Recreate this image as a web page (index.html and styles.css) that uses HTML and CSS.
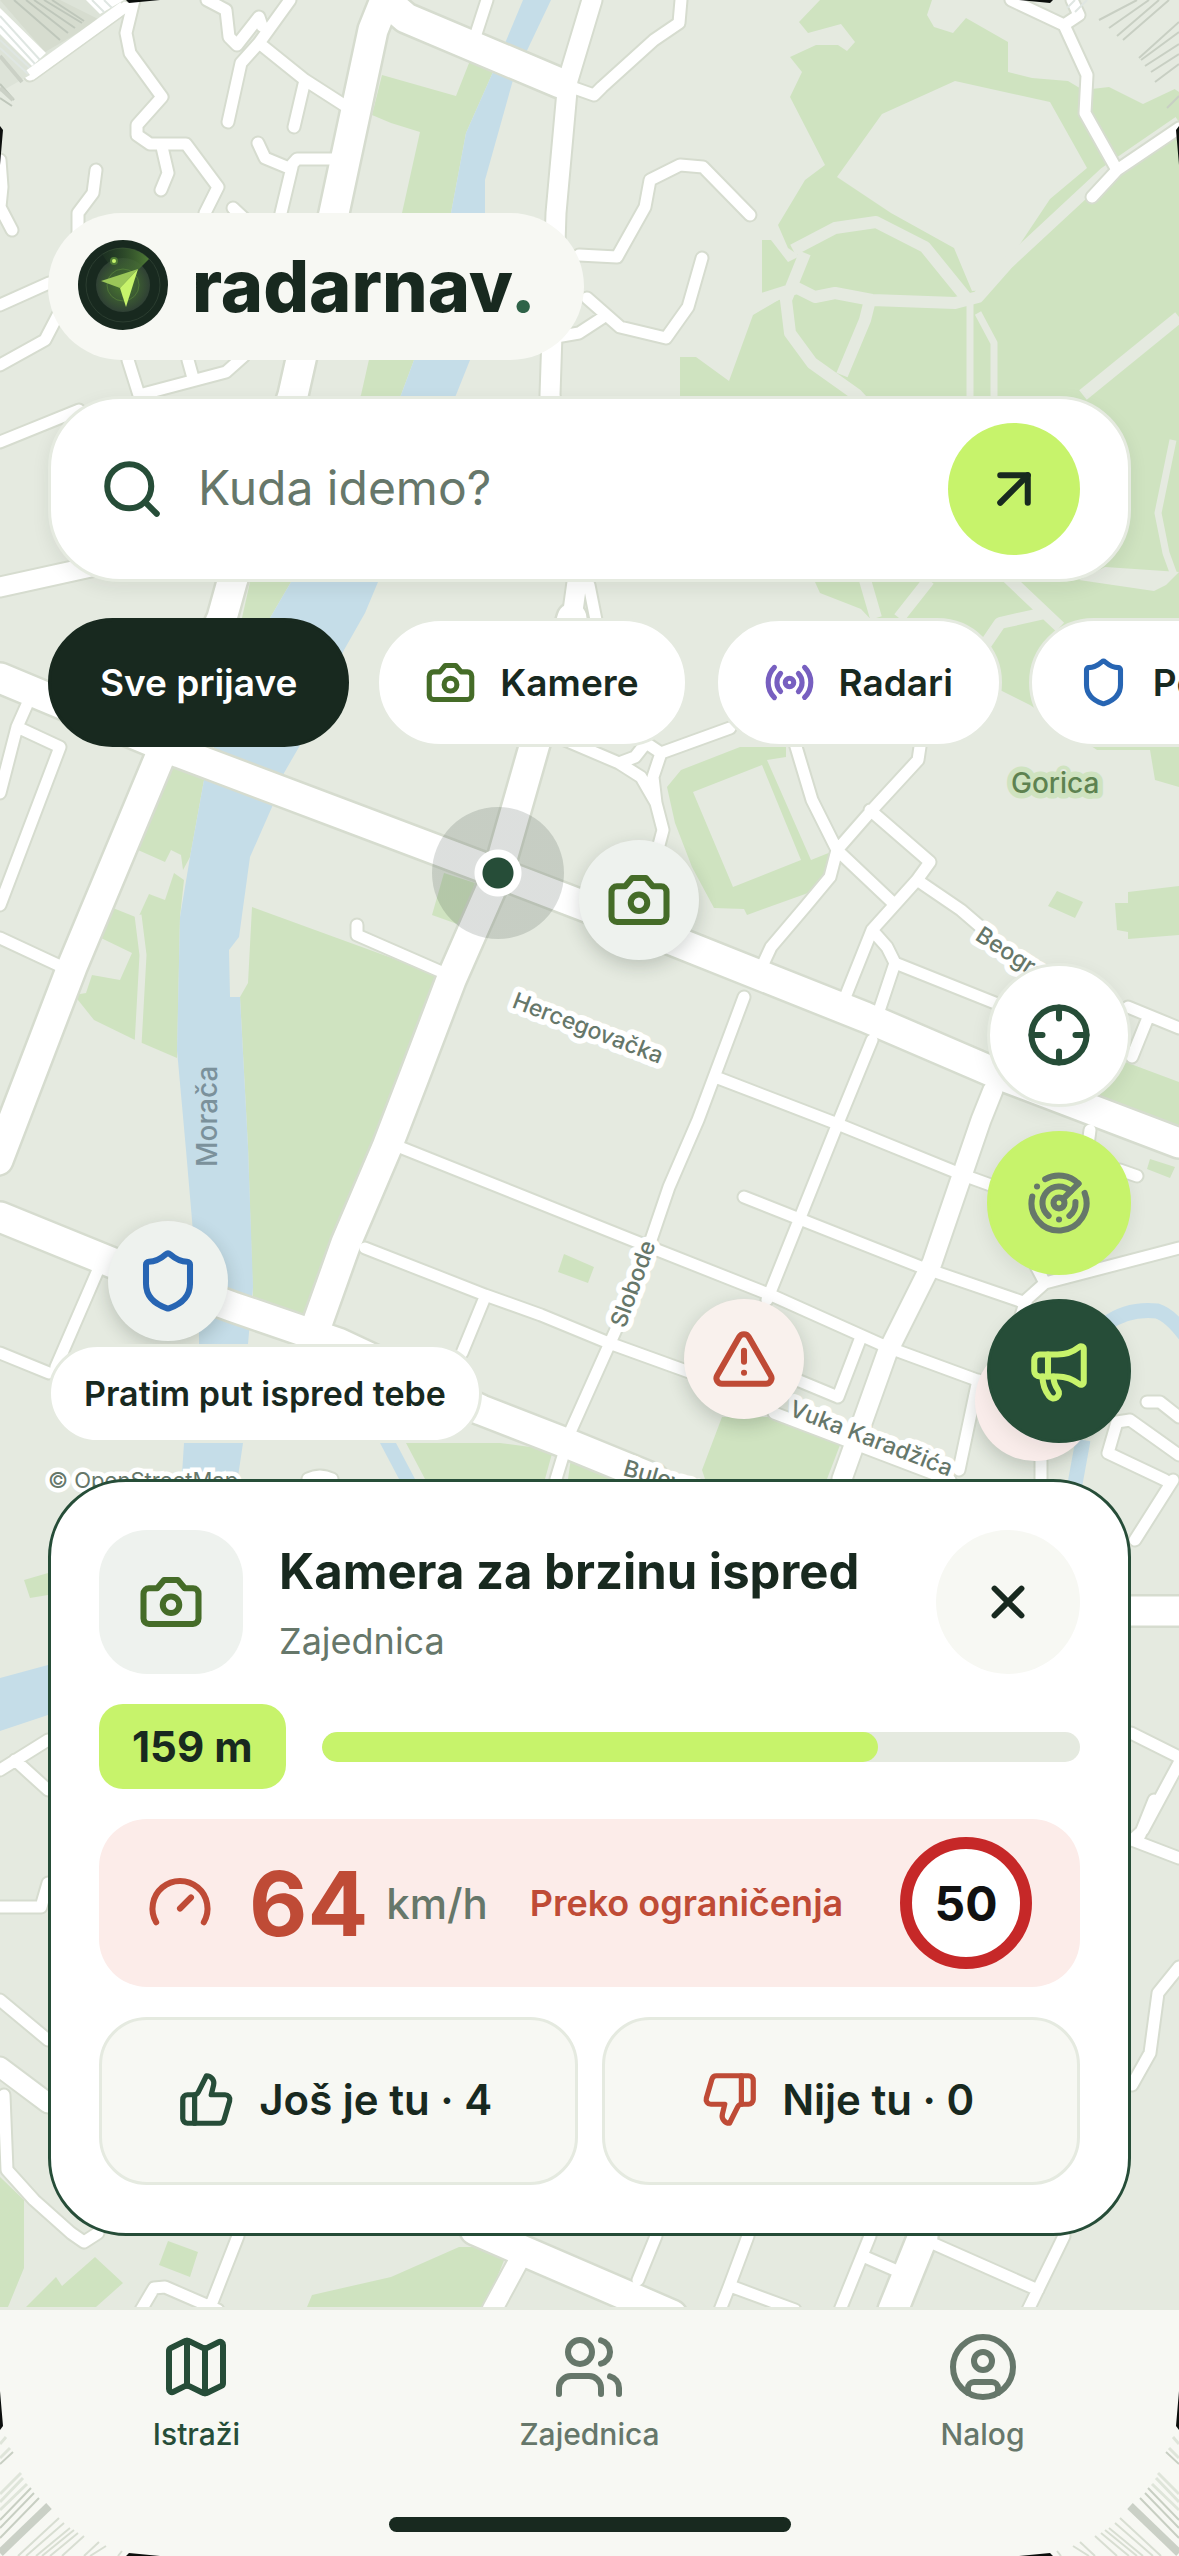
FILE: index.html
```html
<!DOCTYPE html>
<html lang="sr-Latn">

<head>
  <meta charset="UTF-8" />
  <meta name="viewport" content="width=device-width, initial-scale=1.0" />
  <title>radarnav</title>
  <link rel="stylesheet" href="styles.css">
</head>

<body>
  <!-- icon set -->
  <svg class="sprite" aria-hidden="true">
    <symbol id="i-search" viewBox="0 0 24 24"><circle cx="11" cy="11" r="8" /><path d="m21 21-4.3-4.3" /></symbol>
    <symbol id="i-arrow" viewBox="0 0 24 24"><path d="M7 7h10v10" /><path d="M7 17 17 7" /></symbol>
    <symbol id="i-camera" viewBox="0 0 24 24"><path d="M14.5 4h-5L7 7H4a2 2 0 0 0-2 2v9a2 2 0 0 0 2 2h16a2 2 0 0 0 2-2V9a2 2 0 0 0-2-2h-3l-2.500-3z" /><circle cx="12" cy="13" r="3" /></symbol>
    <symbol id="i-radio" viewBox="0 0 24 24"><path d="M4.900 19.100C1 15.200 1 8.800 4.900 4.900" /><path d="M7.800 16.200c-2.300-2.300-2.300-6.100 0-8.500" /><circle cx="12" cy="12" r="2" /><path d="M16.200 7.800c2.300 2.300 2.300 6.100 0 8.500" /><path d="M19.100 4.900C23 8.800 23 15.100 19.100 19" /></symbol>
    <symbol id="i-shield" viewBox="0 0 24 24"><path d="M20 13c0 5-3.500 7.500-7.660 8.950a1 1 0 0 1-.67-.01C7.500 20.500 4 18 4 13V6a1 1 0 0 1 1-1c2 0 4.500-1.200 6.240-2.720a1.170 1.170 0 0 1 1.520 0C14.510 3.810 17 5 19 5a1 1 0 0 1 1 1z" /></symbol>
    <symbol id="i-alert" viewBox="0 0 24 24"><path d="m21.730 18-8-14a2 2 0 0 0-3.480 0l-8 14A2 2 0 0 0 4 21h16a2 2 0 0 0 1.730-3" /><path d="M12 9v4" /><path d="M12 17h.01" /></symbol>
    <symbol id="i-locate" viewBox="0 0 24 24"><circle cx="12" cy="12" r="10" /><path d="M22 12h-4M6 12H2M12 6V2M12 22v-4" /></symbol>
    <symbol id="i-radar" viewBox="0 0 24 24"><path d="M19.070 4.930A10 10 0 0 0 6.990 3.340" /><path d="M4 6h.01" /><path d="M2.290 9.620A10 10 0 1 0 21.310 8.350" /><path d="M16.240 7.760A6 6 0 1 0 8.230 16.670" /><path d="M12 18h.01" /><path d="M17.990 11.660A6 6 0 0 1 15.770 16.670" /><circle cx="12" cy="12" r="2" /><path d="m13.410 10.590 5.660-5.660" /></symbol>
    <symbol id="i-megaphone" viewBox="0 0 24 24"><path d="M11 6a13 13 0 0 0 8.400-2.800A1 1 0 0 1 21 4v12a1 1 0 0 1-1.600.8A13 13 0 0 0 11 14H5a2 2 0 0 1-2-2V8a2 2 0 0 1 2-2z" /><path d="M6 14a12 12 0 0 0 2.400 7.200 2 2 0 0 0 3.200-2.400A8 8 0 0 1 10 14" /><path d="M8 6v8" /></symbol>
    <symbol id="i-close" viewBox="0 0 24 24"><path d="M18 6 6 18M6 6l12 12" /></symbol>
    <symbol id="i-gauge" viewBox="0 0 24 24"><path d="m12 14 4-4" /><path d="M3.340 19a10 10 0 1 1 17.320 0" /></symbol>
    <symbol id="i-up" viewBox="0 0 24 24"><path d="M7 10v12" /><path d="M15 5.880 14 10h5.830a2 2 0 0 1 1.920 2.560l-2.330 8A2 2 0 0 1 17.500 22H4a2 2 0 0 1-2-2v-8a2 2 0 0 1 2-2h2.760a2 2 0 0 0 1.790-1.110L12 2a3.130 3.130 0 0 1 3 3.880Z" /></symbol>
    <symbol id="i-down" viewBox="0 0 24 24"><path d="M17 14V2" /><path d="M9 18.120 10 14H4.170a2 2 0 0 1-1.920-2.560l2.330-8A2 2 0 0 1 6.500 2H20a2 2 0 0 1 2 2v8a2 2 0 0 1-2 2h-2.760a2 2 0 0 0-1.790 1.110L12 22a3.130 3.130 0 0 1-3-3.880Z" /></symbol>
    <symbol id="i-map" viewBox="0 0 24 24"><path d="M14.110 5.550a2 2 0 0 0 1.780 0l3.660-1.830A1 1 0 0 1 21 4.620v12.760a1 1 0 0 1-.55.9l-4.560 2.270a2 2 0 0 1-1.780 0l-4.220-2.100a2 2 0 0 0-1.780 0l-3.660 1.830A1 1 0 0 1 3 19.380V6.620a1 1 0 0 1 .55-.9l4.560-2.270a2 2 0 0 1 1.780 0z" /><path d="M15 5.760v15M9 3.240v15" /></symbol>
    <symbol id="i-users" viewBox="0 0 24 24"><path d="M16 21v-2a4 4 0 0 0-4-4H6a4 4 0 0 0-4 4v2" /><circle cx="9" cy="7" r="4" /><path d="M22 21v-2a4 4 0 0 0-3-3.870" /><path d="M16 3.130a4 4 0 0 1 0 7.750" /></symbol>
    <symbol id="i-user" viewBox="0 0 24 24"><circle cx="12" cy="12" r="10" /><circle cx="12" cy="10" r="3" /><path d="M7 20.660V19a2 2 0 0 1 2-2h6a2 2 0 0 1 2 2v1.660" /></symbol>
  </svg>

  <main class="screen">
    <svg class="map" viewBox="0 0 1179 2556" preserveAspectRatio="xMidYMin slice" role="img" aria-label="Mapa">
      <defs>
        <g id="roads-s">
          <path d="M30 75 124 7M134 0 126 33 130 53 162 97 137 125V135L150 144H186L218 187 205 213M162 147 168 173 161 190M207 0 226 10 229 37 237 45 259 17 262 26M290 0 259 43 241 63 228 122M259 43 305 80 347 107M305 80 294 127" />
          <path d="M258 143 265 158 289 168 297 159H335M292 167 281 213M96 170 93 193 78 213V235M0 160 2 187 0 207 12 230M233 208 248 222M0 305 49 283M0 365 45 340 58 315M128 360 139 395 226 372 244 356M188 360 193 378M139 395 141 402M0 442 79 410" />
          <path d="M487 0 475 37M681 0 679 23 654 40 602 87 594 95 560 83M750 215 703 167 680 165 650 180 645 207 617 257 579 255M702 258 688 307 666 338 620 327 587 298M602 318 579 333 556 337M1011 0 1064 25 1087 75 1085 113 1117 170M1179 128 1117 170 1092 197M1072 0 1079 15 1064 25" />
          <path d="M589 585 596 620M29 700 17 727 60 747 0 905M17 727 0 793M0 938 58 965M98 1270 56 1367M0 1353 49 1373M565 740 619 763 641 777 656 803 663 830 659 845M619 763 635 757 646 743 661 753 730 728M661 753 653 777 656 803" />
          <path d="M794 740 812 800 837 850 892 902M921 740 918 760 872 810 837 850 830 877 805 907 771 947 758 975M870 810 930 862 917 880 872 930 860 960 840 1010M917 880 961 910 990 935M872 930 887 947 895 963 876 1020M895 963 1000 1005M1128 1007 1179 1028M1147 1020 1132 1057M357 925V935L444 973" />
          <path d="M744 997 698 1120 669 1187 635 1287 571 1430 556 1479M872 1040 838 1123 767 1300M485 1297 462 1353M861 1337 838 1397M978 1380 959 1470M1041 1455V1479M718 1078 835 1123 963 1175 1010 1192M402 1148 632 1240 771 1295 887 1347 985 1383M744 1197 921 1267 1026 1303M365 1248 485 1295 541 1315 609 1343 692 1373M797 1380 838 1397M774 1413 950 1480" />
          <path d="M1179 1248 1045 1283 1026 1300 1018 1325M1036 1266 1045 1283M1090 1130 1088 1145M1120 1170 1137 1176M1147 1402H1160L1179 1417M1179 1455 1130 1420 1117 1422 1108 1453 1165 1480M1173 1480 1135 1540M308 1479Q320 1473 332 1479M1131 1733 1179 1757M1179 1763 1143 1830 1132 1840 1179 1858M1154 1800 1140 1835M1179 1967 1158 1993 1150 2053 1132 2085" />
          <path d="M0 1770 48 1740M15 1760 48 1790M0 1907H41L48 1883M0 2000 48 2040M4 2095 7 2170 34 2200 71 2233 84 2242 98 2233M238 2236 211 2305M141 2310 154 2288 165 2287 218 2310M656 2236 638 2280M748 2236 729 2287 720 2310M733 2287 795 2310M870 2236 840 2310M865 2257 895 2270M932 2243 1038 2290M1064 2236 1028 2310" />
        </g>
        <g id="roads-m">
          <path d="M592 0 568 80 556 213 550 395 577 582 572 618M0 587 100 565M993 1090 981 1120 932 1263 887 1353 842 1479M0 2067 48 2103M519 2260 492 2310" />
        </g>
        <g id="roads-l">
          <path d="M385 0 373 30 334 213 293 395 232 582 222 618 164 747 72 967-2 1160M385 0 406 18 560 83M572 618 534 747 498 873 451 980 414 1077 387 1147 346 1243 316 1327" />
          <path d="M0 678 180 753 331 810 498 873 639 927 865 1017 1000 1075 1179 1143M0 1217 113 1263 233 1307 338 1343 481 1410 571 1445 654 1479M475 2230 672 2315M923 2236 893 2310M1131 1611H1179" />
        </g>
      </defs>

      <g class="park">
        <path d="M382 75 456 96 471 58 493 72 466 133 451 213 414 360 401 395 291 582 270 618H242L250 582 361 395 402 213 420 132 391 123 372 115z" />
        <path d="M820 0 799 22 808 33 841 24 855 42 847 51 838 45H816L790 57 802 72 790 97 825 165 805 180 778 225 788 248 800 256 788 262 771 240H762V297L782 298 753 315 729 381 696 357H680V560L815 582 820 593 861 609 890 640 1003 700 1010 697 1040 720 1085 750H1150L1155 780 1179 787V87L1143 104 1109 87 1083 90 1068 81 1032 78 1008 72V42L966 18 953 33 934 27 927 15 932 0z" />
        <path d="M173 765 204 780 190 857 183 870 181 855 171 850 165 862 138 850zM174 873 165 900 149 894 138 918 113 908 101 938 132 953 120 980 92 975 86 993 74 995 94 1020 135 1040 177 1058 180 917 184 880zM252 907 444 977 406 1063 374 1147 305 1322 253 1300 248 1147 240 997 248 983zM444 873 475 883 460 925 432 915z" />
        <path fill-rule="evenodd" d="M740 747H786V757L767 760 811 860 831 852 827 877 808 893 747 915 744 909 714 908 692 867 675 823 667 787 681 770zM693 792 762 765 801 860 733 887z" />
        <path d="M1128 892 1179 886V935L1128 939V932L1117 930 1115 903H1128zM1057 891 1083 902 1075 918 1048 906zM1120 1060 1179 1082V1130L1098 1098zM1150 1159 1175 1167 1170 1178 1147 1169z" />
        <path d="M406 1443H500L553 1450 545 1479H425zM571 1458 617 1479H568zM722 1417H771L840 1445 827 1479H705L702 1470zM564 1254 594 1267 588 1283 558 1272zM24 1580 48 1573V1595L30 1598z" />
        <path d="M0 2177 24 2200V2268L8 2307H0zM26 2307 56 2277 62 2286 95 2257 123 2283 96 2307zM168 2241 198 2252 190 2277 159 2265zM307 2307 312 2295 391 2277 459 2247H481L505 2258 485 2307z" />
      </g>
      <g class="clearing">
        <path d="M955 81 1050 102 1087 168 1050 199 1008 262 985 290 972 291 954 248 891 213 837 177 882 114zM1079 580 1105 567 1179 572 1166 585 1154 591zM1000 690 1030 705 1100 752 1000 752z" />
      </g>
      <g class="footpath">
        <path d="M1179 122 1128 157 1105 173 1008 263 978 297 955 303 872 300 835 293 815 297 797 288 762 299M793 250 835 228 876 222 925 247 968 300M805 253 786 300 790 333 812 363 857 395 880 420M870 300 865 320 842 375M1179 317 1083 395M865 580 876 618M929 580 899 618M1005 575 1060 627M1045 613 1000 623 985 645" />
        <path class="thin" d="M970 303V400M978 313 994 343V400M1173 440 1158 513 1166 553 1174 575M138 915 143 955 138 1045" />
      </g>
      <g class="water">
        <path d="M523 0H551L513 80 485 180V213L470 360 456 395 378 582 365 613 344 650 299 747 284 773 272 807 250 857 239 937 229 950 230 997H240L248 1147 253 1287 248 1344 243 1443 236 1490H181L184 1443 199 1344V1320L192 1220 186 1150 177 1050 180 917 190 857 204 780 214 747 270 618 291 582 401 395 414 360 451 213 466 133 493 72z" />
        <path d="M380 1443H396L415 1479H399zM0 1678 48 1665V1715L0 1731z" />
        <path class="stream" d="M1106 1324Q1128 1308 1157 1311 1170 1315 1185 1335M1083 1440 1075 1484" />
      </g>

      <g class="casing">
        <use href="#roads-s" class="s" />
        <use href="#roads-m" class="m" />
        <use href="#roads-l" class="l" />
      </g>
      <g class="surface">
        <use href="#roads-s" class="s" />
        <use href="#roads-m" class="m" />
        <use href="#roads-l" class="l" />
      </g>

      <g class="street">
        <text class="place" x="1011" y="793">Gorica</text>
        <text class="river" transform="translate(217 1167) rotate(-90)">Morača</text>
        <text transform="translate(511 1007) rotate(21)">Hercegovačka</text>
        <text transform="translate(974 939) rotate(33)">Beogradska</text>
        <text transform="translate(625 1329) rotate(-70)">Slobode</text>
        <text transform="translate(788 1415) rotate(21)">Vuka Karadžića</text>
        <text transform="translate(622 1475) rotate(16)">Bulevar</text>
      </g>
    </svg>

    <!-- pins on the map -->
    <div class="me"></div>
    <button class="pin pin-camera" aria-label="Kamera"><svg class="icon"><use href="#i-camera" /></svg></button>
    <button class="pin pin-police" aria-label="Policija"><svg class="icon"><use href="#i-shield" /></svg></button>
    <button class="pin pin-danger" aria-label="Opasnost"><svg class="icon"><use href="#i-alert" /></svg></button>
    <button class="pin pin-report" aria-label="Prijava"></button>

    <header class="top">
      <div class="brand">
        <svg class="logo" viewBox="0 0 90 90" aria-hidden="true">
          <defs>
            <radialGradient id="glow">
              <stop offset="0" stop-color="#568d33" />
              <stop offset="1" stop-color="#35463a" />
            </radialGradient>
            <linearGradient id="sweep" x1="0" y1="0" x2="1" y2="0">
              <stop offset="0" stop-color="#2c4a2c" stop-opacity="0.2" />
              <stop offset="1" stop-color="#4f7b35" />
            </linearGradient>
          </defs>
          <circle cx="45" cy="45" r="45" fill="#18291f" />
          <circle cx="45" cy="45" r="37" fill="none" stroke="#2b3d30" />
          <circle cx="45" cy="45" r="27" fill="url(#glow)" opacity="0.8" />
          <path d="M45 45 24 14A37 37 0 0 1 71 19z" fill="url(#sweep)" />
          <circle cx="45" cy="45" r="16" fill="none" stroke="#5d8c3c" opacity="0.6" />
          <circle cx="36" cy="21" r="4" fill="#4f7b35" />
          <circle cx="36" cy="21" r="2" fill="#c7f36b" />
          <path d="M60 29 23 41 42 48z" fill="#9ac659" />
          <path d="M60 29 42 48 48 67z" fill="#c7f36b" />
        </svg>
        <h1>radarnav<span>.</span></h1>
      </div>

      <form class="search">
        <svg class="icon"><use href="#i-search" /></svg>
        <input type="text" placeholder="Kuda idemo?" aria-label="Kuda idemo?" />
        <button type="button" class="go" aria-label="Kreni"><svg class="icon"><use href="#i-arrow" /></svg></button>
      </form>

      <div class="chips">
        <button class="chip active">Sve prijave</button>
        <button class="chip"><svg class="icon green"><use href="#i-camera" /></svg>Kamere</button>
        <button class="chip"><svg class="icon purple"><use href="#i-radio" /></svg>Radari</button>
        <button class="chip"><svg class="icon blue"><use href="#i-shield" /></svg>Policija</button>
      </div>
    </header>

    <div class="tools">
      <div class="toast">Pratim put ispred tebe</div>
      <div class="fabs">
        <button class="fab" aria-label="Moja lokacija"><svg class="icon"><use href="#i-locate" /></svg></button>
        <button class="fab fab-radar" aria-label="Radar"><svg class="icon"><use href="#i-radar" /></svg></button>
        <button class="fab fab-report" aria-label="Prijavi"><svg class="icon"><use href="#i-megaphone" /></svg></button>
      </div>
      <a class="credit" href="#">© OpenStreetMap</a>
    </div>

    <section class="card">
      <div class="card-head">
        <div class="tile"><svg class="icon"><use href="#i-camera" /></svg></div>
        <div class="card-title">
          <h2>Kamera za brzinu ispred</h2>
          <p>Zajednica</p>
        </div>
        <button class="close" aria-label="Zatvori"><svg class="icon"><use href="#i-close" /></svg></button>
      </div>

      <div class="distance">
        <label for="distance">159 m</label>
        <progress id="distance" max="1000" value="734"></progress>
      </div>

      <div class="speed">
        <svg class="icon"><use href="#i-gauge" /></svg>
        <strong>64</strong>
        <span class="unit">km/h</span>
        <span class="over">Preko ograničenja</span>
        <span class="limit">50</span>
      </div>

      <div class="votes">
        <button class="vote"><svg class="icon dark"><use href="#i-up" /></svg>Još je tu · 4</button>
        <button class="vote"><svg class="icon red"><use href="#i-down" /></svg>Nije tu · 0</button>
      </div>
    </section>

    <nav class="tabs">
      <a class="tab active" href="#"><svg class="icon"><use href="#i-map" /></svg>Istraži</a>
      <a class="tab" href="#"><svg class="icon"><use href="#i-users" /></svg>Zajednica</a>
      <a class="tab" href="#"><svg class="icon"><use href="#i-user" /></svg>Nalog</a>
      <div class="home-bar"></div>
    </nav>

    <!-- streaked screen corners -->
    <svg class="corner top-left" viewBox="0 0 180 180" aria-hidden="true">
      <path fill="#dde3d8" d="M0 0H126L30 75 0 92z" />
      <path fill="#d6dccf" d="M0 0H60L100 20 45 52z" />
      <path fill="#fff" d="M0 8 46 53 32 66 0 34zM86 0H124L100 14z" />
      <path stroke="#bfc7bb" stroke-width="2" d="M14 0 60 40M26 0 68 33M34 0 75 28M44 0 82 23M52 0 84 21M0 84 14 100M0 98 12 106" />
      <path stroke="#dfe6e2" stroke-width="2" d="M0 16 40 60M0 26 36 65M0 40 32 70M0 48 28 74M92 0 104 12M104 0 112 8" />
      <path stroke="#cbd1c6" stroke-width="4" d="M0 56 22 82M0 88 13 100" />
      <path stroke="#fff" stroke-width="12" d="M30 75 124 7" />
      <path fill="#0c0f0d" d="M126 0H160L129 3zM0 126 3 130 0 165z" />
    </svg>
    <svg class="corner top-right" viewBox="0 0 180 180" aria-hidden="true">
      <path fill="#e5eae0" d="M0 0H96L36 68 0 92z" />
      <path stroke="#c8cfc3" stroke-width="2" d="M10 0 56 40M20 0 62 36M30 0 70 28M42 0 80 20M0 22 40 58M0 32 38 60M0 44 34 66M0 54 28 72M0 64 24 82M0 96 12 108" />
      <path stroke="#dfe6e2" stroke-width="2" d="M92 0 104 12M104 0 112 8" />
      <path fill="#0c0f0d" d="M126 0H160L129 3zM0 126 3 130 0 165z" />
    </svg>
    <svg class="corner bottom-left" viewBox="0 0 180 180" aria-hidden="true">
      <path stroke="#cad0c6" stroke-width="8" d="M0 3 49 50" />
      <path stroke="#d8ded2" stroke-width="2" d="M18 0 59 38M26 0 64 33M36 0 70 28M42 0 74 26M50 0 78 23M62 0 84 20M84 0 99 14M90 0 106 10M118 0 122 5" />
      <path stroke="#c8cfc3" stroke-width="2" d="M0 18 39 58M0 28 34 63M0 36 31 68M0 92 13 104" />
      <path stroke="#dfe5da" stroke-width="3" d="M0 46 27 72M0 54 23 78M0 62 21 83M0 98 10 108M0 112 6 119" />
      <path fill="#0c0f0d" d="M126 0H160L129 3zM0 126 3 130 0 165z" />
    </svg>
    <svg class="corner bottom-right" viewBox="0 0 180 180" aria-hidden="true">
      <path stroke="#cad0c6" stroke-width="8" d="M0 3 49 50" />
      <path stroke="#d8ded2" stroke-width="2" d="M18 0 59 38M26 0 64 33M36 0 70 28M42 0 74 26M50 0 78 23M62 0 84 20M84 0 99 14M90 0 106 10M118 0 122 5" />
      <path stroke="#c8cfc3" stroke-width="2" d="M0 18 39 58M0 28 34 63M0 36 31 68M0 92 13 104" />
      <path stroke="#dfe5da" stroke-width="3" d="M0 46 27 72M0 54 23 78M0 62 21 83M0 98 10 108M0 112 6 119" />
      <path fill="#0c0f0d" d="M126 0H160L129 3zM0 126 3 130 0 165z" />
    </svg>
  </main>
</body>

</html>
```
FILE: styles.css
```css
* {
  box-sizing: border-box;
}

body {
  margin: 0;
  font-family: Inter, "Noto Sans", sans-serif;
  color: #18291f;
  background: #e5eae0;
}

h1,
h2,
p {
  margin: 0;
}

button,
input {
  font-family: inherit;
  color: inherit;
}

button {
  padding: 0;
  border: none;
  cursor: pointer;
}

.sprite {
  position: absolute;
  width: 0;
  height: 0;
}

.icon {
  flex: none;
  width: 66px;
  height: 66px;
  fill: none;
  stroke: currentColor;
  stroke-width: 2.2;
  stroke-linecap: round;
  stroke-linejoin: round;
}

.green {
  color: #456c28;
}

.purple {
  color: #775fc0;
}

.blue {
  color: #2765b3;
}

.dark {
  color: #264d38;
}

.red {
  color: #bf4b36;
}

.screen {
  position: relative;
  display: flex;
  flex-direction: column;
  min-height: 100vh;
  overflow: hidden;
}

/* map */
.map {
  position: absolute;
  top: 0;
  left: 0;
  width: 100%;
  height: 100%;
}

.park {
  fill: #cfe3c0;
}

.clearing {
  fill: #e5eae0;
}

.footpath {
  fill: none;
  stroke: #e5eae0;
  stroke-width: 12;
  stroke-linejoin: round;
}

.footpath .thin {
  stroke-width: 7;
}

.water {
  fill: #c5dde8;
}

.stream {
  fill: none;
  stroke: #c5dde8;
  stroke-width: 15;
}

.casing,
.surface {
  fill: none;
  stroke-linecap: round;
  stroke-linejoin: round;
}

.casing {
  stroke: #d6dccf;
}

.surface {
  stroke: #fff;
}

.casing .s {
  stroke-width: 15;
}

.casing .m {
  stroke-width: 23;
}

.casing .l {
  stroke-width: 34;
}

.surface .s {
  stroke-width: 11;
}

.surface .m {
  stroke-width: 19;
}

.surface .l {
  stroke-width: 29;
}

.street {
  font-size: 23px;
  font-weight: 500;
  fill: #66776a;
  stroke: #fff;
  stroke-width: 11;
  stroke-linejoin: round;
  paint-order: stroke;
}

.street .place {
  font-size: 28px;
  fill: #5d8250;
  stroke: #cfe3c0;
}

.street .river {
  font-size: 28px;
  fill: #7b919b;
  stroke: none;
}

.me {
  position: absolute;
  left: 432px;
  top: 807px;
  width: 132px;
  height: 132px;
  border-radius: 50%;
  background: radial-gradient(circle, #264d38 15px, #fff 16px, #fff 23px, rgba(24, 41, 31, 0.15) 24px);
}

.pin {
  position: absolute;
  display: flex;
  align-items: center;
  justify-content: center;
  width: 120px;
  height: 120px;
  border-radius: 50%;
  background: #eef2ee;
  box-shadow: 0 6px 18px rgba(24, 41, 31, 0.2);
}

.pin-camera {
  left: 579px;
  top: 840px;
  color: #456c28;
}

.pin-police {
  left: 108px;
  top: 1221px;
  color: #2765b3;
}

.pin-danger {
  left: 684px;
  top: 1299px;
  color: #bf4b36;
  background: #f9f1ed;
}

.pin-report {
  left: 975px;
  top: 1341px;
  background: #f9ecea;
}

/* top */
.top {
  position: relative;
  display: flex;
  flex-direction: column;
  align-items: flex-start;
  gap: 36px;
  padding: 213px 48px 0;
}

.brand {
  display: flex;
  align-items: center;
  gap: 24px;
  height: 147px;
  padding: 0 48px 3px 30px;
  border-radius: 74px;
  background: #f7f8f3;
}

.logo {
  width: 90px;
  height: 90px;
}

.brand h1 {
  font-size: 72px;
  font-weight: 800;
}

.brand span {
  color: #2f6348;
}

.search {
  display: flex;
  align-items: center;
  gap: 33px;
  width: 100%;
  height: 186px;
  padding: 0 48px;
  border: 3px solid #e5eae0;
  border-radius: 72px;
  background: #fff;
  box-shadow: 0 6px 18px rgba(24, 41, 31, 0.08);
}

.search > .icon {
  color: #264d38;
}

.search input {
  flex: 1;
  min-width: 0;
  padding: 0 0 3px;
  border: none;
  outline: none;
  background: none;
  font-size: 48px;
}

.search input::placeholder {
  color: #66776a;
  opacity: 1;
}

.go {
  display: flex;
  align-items: center;
  justify-content: center;
  width: 132px;
  height: 132px;
  border-radius: 50%;
  background: #c7f36b;
}

.chips {
  display: flex;
  gap: 27px;
}

.chip {
  flex: none;
  display: flex;
  align-items: center;
  gap: 24px;
  height: 129px;
  padding: 0 46px;
  border: 3px solid #e5eae0;
  border-radius: 65px;
  background: #fff;
  font-size: 37px;
  font-weight: 600;
}

.chip .icon {
  width: 51px;
  height: 51px;
  stroke-width: 2.4;
}

.chip.active {
  padding: 0 49px;
  border-color: #18291f;
  background: #18291f;
  color: #fff;
}

/* toast and round buttons */
.tools {
  position: relative;
  display: flex;
  align-items: flex-end;
  justify-content: space-between;
  margin-top: auto;
  padding: 0 48px 36px;
}

.toast {
  display: flex;
  align-items: center;
  height: 99px;
  padding: 0 33px;
  border: 3px solid #e5eae0;
  border-radius: 50px;
  background: #fff;
  font-size: 34px;
  font-weight: 600;
}

.fabs {
  display: flex;
  flex-direction: column;
  gap: 24px;
}

.fab {
  display: flex;
  align-items: center;
  justify-content: center;
  width: 144px;
  height: 144px;
  border: 3px solid #e5eae0;
  border-radius: 50%;
  background: #fff;
  color: #264d38;
  box-shadow: 0 6px 18px rgba(24, 41, 31, 0.08);
}

.fab-radar {
  border-color: #c7f36b;
  background: #c7f36b;
  color: #66776a;
}

.fab-report {
  border-color: #264d38;
  background: #264d38;
  color: #c7f36b;
}

.credit {
  position: absolute;
  left: 48px;
  bottom: -18px;
  font-size: 22px;
  line-height: 33px;
  color: #66776a;
  text-decoration: none;
  -webkit-text-stroke: 9px #fff;
  paint-order: stroke;
}

/* alert card */
.card {
  position: relative;
  display: flex;
  flex-direction: column;
  gap: 30px;
  margin: 0 48px 71px;
  padding: 48px;
  border: 3px solid #264d38;
  border-radius: 78px;
  background: #fff;
}

.card-head {
  display: flex;
  align-items: center;
  gap: 36px;
}

.tile {
  display: flex;
  align-items: center;
  justify-content: center;
  width: 144px;
  height: 144px;
  border-radius: 48px;
  background: #eef2ee;
  color: #456c28;
}

.card-title {
  flex: 1;
  padding-top: 3px;
}

.card-title h2 {
  font-size: 49px;
  line-height: 60px;
  font-weight: 700;
}

.card-title p {
  margin-top: 15px;
  font-size: 36px;
  line-height: 48px;
  color: #66776a;
}

.close {
  display: flex;
  align-items: center;
  justify-content: center;
  width: 144px;
  height: 144px;
  border-radius: 50%;
  background: #f7f8f3;
}

.close .icon {
  width: 54px;
  height: 54px;
  stroke-width: 2.6;
}

.distance {
  display: flex;
  align-items: center;
  gap: 36px;
}

.distance label {
  padding: 0 33px;
  border-radius: 24px;
  background: #c7f36b;
  font-size: 42px;
  line-height: 85px;
  font-weight: 700;
}

.distance progress {
  flex: 1;
  height: 30px;
  border: none;
  border-radius: 15px;
  overflow: hidden;
  appearance: none;
  background: #e5eae0;
}

.distance progress::-webkit-progress-bar {
  background: #e5eae0;
}

.distance progress::-webkit-progress-value {
  border-radius: 15px;
  background: #c7f36b;
}

.speed {
  display: flex;
  align-items: center;
  height: 168px;
  padding: 0 48px;
  border-radius: 48px;
  background: #fcece9;
  color: #bf4b36;
}

.speed strong {
  margin-left: 36px;
  font-size: 90px;
  font-weight: 700;
}

.unit {
  margin-left: 18px;
  font-size: 42px;
  font-weight: 500;
  color: #66776a;
}

.over {
  flex: 1;
  padding-right: 15px;
  text-align: center;
  font-size: 36px;
  font-weight: 600;
}

.limit {
  display: flex;
  align-items: center;
  justify-content: center;
  width: 132px;
  height: 132px;
  border: 12px solid #c62828;
  border-radius: 50%;
  background: #fff;
  color: #111;
  font-size: 48px;
  font-weight: 700;
}

.votes {
  display: grid;
  grid-template-columns: 1fr 1fr;
  gap: 24px;
}

.vote {
  display: flex;
  align-items: center;
  justify-content: center;
  gap: 24px;
  height: 168px;
  padding: 0 6px 3px 0;
  border: 3px solid #e5eae0;
  border-radius: 48px;
  background: #f7f8f3;
  font-size: 42px;
  font-weight: 600;
}

.vote .icon {
  width: 57px;
  height: 57px;
}

/* bottom tabs */
.tabs {
  position: relative;
  display: grid;
  grid-template-columns: repeat(3, 1fr);
  justify-items: center;
  border-top: 3px solid #e5eae0;
  padding: 21px 0 24px;
  background: #f7f8f3;
}

.tab {
  display: flex;
  flex-direction: column;
  align-items: center;
  gap: 10px;
  font-size: 30px;
  line-height: 42px;
  font-weight: 500;
  color: #66776a;
  text-decoration: none;
}

.tab.active {
  color: #264d38;
}

.tab .icon {
  width: 72px;
  height: 72px;
  stroke-width: 2;
}

.home-bar {
  grid-column: 1 / -1;
  width: 402px;
  height: 15px;
  margin-top: 62px;
  border-radius: 8px;
  background: #18291f;
}

.corner {
  position: absolute;
  width: 180px;
  height: 180px;
  pointer-events: none;
}

.top-left {
  top: 0;
  left: 0;
}

.top-right {
  top: 0;
  right: 0;
  transform: scaleX(-1);
}

.bottom-left {
  bottom: 0;
  left: 0;
  transform: scaleY(-1);
}

.bottom-right {
  bottom: 0;
  right: 0;
  transform: scale(-1);
}
```
